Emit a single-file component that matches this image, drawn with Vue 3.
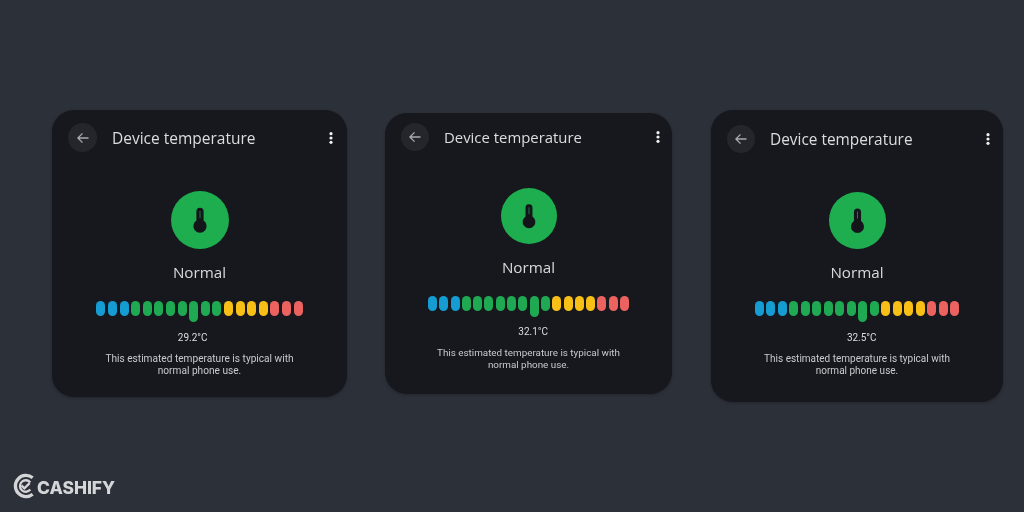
<script setup>
const cards = [
  { id: 'one', temp: '29.2°C', tall: 8 },
  { id: 'two', temp: '32.1°C', tall: 9 },
  { id: 'three', temp: '32.5°C', tall: 9 }
]

const barColor = (i) => {
  if (i < 3) return 'blue'
  if (i < 11) return 'green'
  if (i < 15) return 'yellow'
  return 'red'
}
</script>

<template>
  <div class="page">
    <div
      v-for="card in cards"
      :key="card.id"
      class="card"
      :class="card.id"
      :style="{ '--tall': card.tall - 8.5 }"
    >
      <div class="top">
        <div class="back">
          <svg width="14" height="14" viewBox="0 0 14 14" fill="none" stroke="#a9abb0" stroke-width="1.3">
            <path d="M12.5 7H2M6.5 2.4 1.9 7l4.6 4.6" />
          </svg>
        </div>
        <div class="title">Device temperature</div>
        <svg class="menu" width="4" height="12" viewBox="0 0 4 12" fill="#f0f0f0">
          <circle cx="2" cy="1.7" r="1.6" />
          <circle cx="2" cy="6" r="1.6" />
          <circle cx="2" cy="10.3" r="1.6" />
        </svg>
      </div>

      <div class="badge">
        <svg viewBox="0 0 58 58" class="thermo">
          <path d="M25.4 20.4a3.6 3.6 0 0 1 7.2 0V29.6A6.6 6.6 0 1 1 25.4 29.6z" fill="#14151a" />
          <path d="M29 20v7" stroke="#1e7a42" stroke-width="1" />
        </svg>
      </div>

      <div class="status">Normal</div>

      <div class="bars">
        <span
          v-for="(n, i) in 18"
          :key="i"
          class="bar"
          :class="[barColor(i), { tall: i === card.tall }]"
        ></span>
      </div>

      <div class="temp">{{ card.temp }}</div>
      <p class="desc">This estimated temperature is typical with<br />normal phone use.</p>
    </div>

    <div class="logo">
      <svg width="25" height="28" viewBox="0 0 26 28" fill="none" stroke="#d4d5d7">
        <path d="M21.5 5.5A11 11 0 1 0 21.5 22.5" stroke-width="3.4" />
        <path d="M19 10.3a6 6 0 1 0 0 7.4" stroke-width="2.4" />
        <path d="M9.8 13.4l3 3 5.6-5.4" stroke-width="2.4" />
      </svg>
      <span class="brand">CASHIFY</span>
    </div>
  </div>
</template>

<style scoped>
.page {
  position: relative;
  width: 1024px;
  height: 512px;
  background: #2c3039;
  overflow: hidden;
  display: flex;
  align-items: flex-start;
  padding-left: 52px;
  box-sizing: border-box;
  font-family: Roboto, "Liberation Sans", sans-serif;
}

.card {
  background: #17181d;
  border-radius: 22px;
  box-sizing: border-box;
  display: flex;
  flex-direction: column;
  align-items: center;
  box-shadow: 0 1px 3px rgba(20, 22, 28, 0.45);
  filter: blur(0.35px);
}

.one {
  width: 295px;
  height: 287px;
  margin-top: 110px;
  --head: 13px;
  --back: 29px;
  --menu-right: 14px;
  --title-size: 15.5px;
  --badge-gap: 39px;
  --badge: 58px;
  --status-gap: 13px;
  --pitch: 11.6px;
  --temp-gap: 9px;
  --desc-size: 10.15px;
}

.two {
  width: 287px;
  height: 281px;
  margin-top: 113px;
  margin-left: 38px;
  --head: 10px;
  --back: 28px;
  --menu-right: 12px;
  --title-size: 14.9px;
  --badge-gap: 37px;
  --badge: 56px;
  --status-gap: 13px;
  --pitch: 11.3px;
  --temp-gap: 8px;
  --desc-size: 9.85px;
}

.three {
  width: 292px;
  height: 292px;
  margin-top: 110px;
  margin-left: 39px;
  --head: 15px;
  --back: 28px;
  --menu-right: 13px;
  --title-size: 15.4px;
  --badge-gap: 39px;
  --badge: 57px;
  --status-gap: 13px;
  --pitch: 11.5px;
  --temp-gap: 9px;
  --desc-size: 10px;
}

.top {
  width: 100%;
  display: flex;
  align-items: center;
  box-sizing: border-box;
  padding: var(--head) var(--menu-right) 0 16px;
}

.back {
  width: var(--back);
  height: var(--back);
  border-radius: 50%;
  background: #24262c;
  display: flex;
  align-items: center;
  justify-content: center;
  flex: none;
}

.title {
  margin-left: 15px;
  font-family: "Open Sans", sans-serif;
  font-size: var(--title-size);
  color: #dcdddf;
  white-space: nowrap;
  flex: 1;
}

.badge {
  width: var(--badge);
  height: var(--badge);
  margin-top: var(--badge-gap);
  border-radius: 50%;
  background: #1eae4f;
  flex: none;
}

.thermo {
  display: block;
  width: 100%;
  height: 100%;
}

.status {
  margin-top: var(--status-gap);
  font-family: "Open Sans", sans-serif;
  font-size: 15.2px;
  line-height: 20px;
  color: #d8d9db;
}

.bars {
  display: flex;
  margin-top: 19px;
  height: 21px;
}

.bar {
  flex: none;
  width: 9px;
  height: 15px;
  margin-right: calc(var(--pitch) - 9px);
  border-radius: 5px;
}

.bar:last-child {
  margin-right: 0;
}

.tall {
  height: 21px;
}

.blue {
  background: #149cd3;
}

.green {
  background: #1fa952;
}

.yellow {
  background: #f8bf16;
}

.red {
  background: #ec625f;
}

/* the reading sits under the tall bar, not under the card's centre */
.temp {
  margin-top: var(--temp-gap);
  margin-left: calc(var(--tall) * var(--pitch) * 2 - 2px);
  font-size: 10px;
  line-height: 14px;
  color: #dcdddf;
}

.desc {
  margin: 8px 0 0;
  font-size: var(--desc-size);
  line-height: 11.6px;
  text-align: center;
  color: #c9cace;
}

.logo {
  position: absolute;
  left: 12px;
  top: 472px;
  display: flex;
  align-items: center;
  color: #d4d5d7;
  font-family: Inter, sans-serif;
  font-weight: 800;
  font-size: 17.4px;
  filter: blur(0.4px);
}

.brand {
  margin-top: 2px;
}
</style>
